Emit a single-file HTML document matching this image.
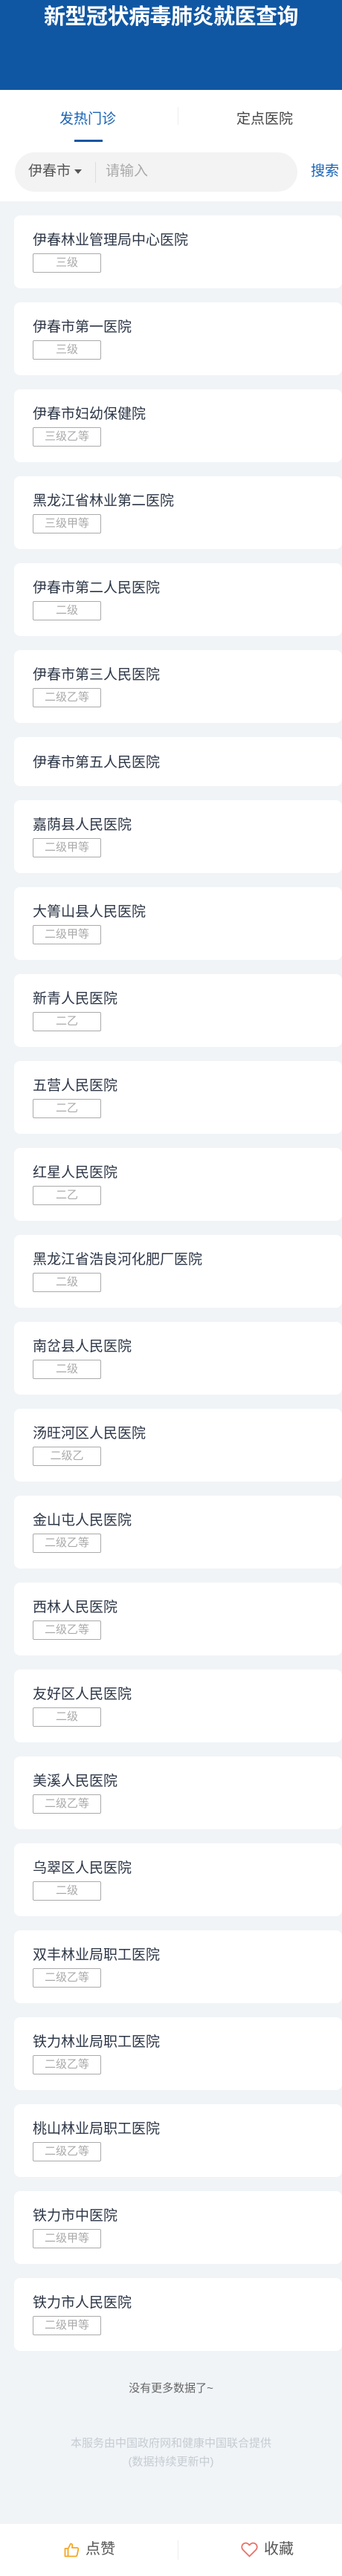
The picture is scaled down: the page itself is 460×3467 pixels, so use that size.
<!DOCTYPE html>
<html><head><meta charset="utf-8"><style>
*{margin:0;padding:0;box-sizing:border-box}
body{width:460px;height:3467px;background:#f0f4f7;font-family:"Liberation Sans","Noto Sans CJK SC",sans-serif;position:relative;overflow:hidden}
.hdr{position:absolute;left:0;top:0;width:460px;height:121px;background:#1057a3;color:#fff;font-size:29px;font-weight:bold;text-align:center;line-height:46px;padding-top:0;letter-spacing:-0.5px}
.top{position:absolute;top:121px;left:0;width:460px;height:150px;background:#fff}
.tab{position:absolute;top:25px;font-size:19px;line-height:30px}
.ul{position:absolute;left:100px;top:67px;width:38px;height:3px;background:#1057a3}
.sep{position:absolute;left:239px;top:23px;width:1px;height:24px;background:#eee}
.pill{position:absolute;left:20px;top:84px;width:380px;height:53px;border-radius:27px;background:#f3f3f3}
.card{position:absolute;left:19px;width:441px;height:98px;background:#fff;border-radius:8px;padding:22px 0 0 25px}
.t{font-size:19px;color:#2c3646;line-height:24px;height:24px}
.g{margin-top:5px;width:92px;height:26px;border:1px solid #aaa;border-radius:2px;color:#aaa;font-size:15px;line-height:24px;text-align:center}
.bb{position:absolute;left:0;top:3397px;width:460px;height:70px;background:#fff}
</style></head><body>
<div class="hdr">新型冠状病毒肺炎就医查询</div>
<div class="top">
<div class="tab" style="left:80px;color:#1a64b5">发热门诊</div>
<div class="tab" style="left:318px;color:#444">定点医院</div>
<div class="sep"></div><div class="ul"></div>
<div class="pill">
<div style="position:absolute;left:18px;top:13px;font-size:19px;color:#555;line-height:26px">伊春市 <span style="display:inline-block;width:0;height:0;border-left:5px solid transparent;border-right:5px solid transparent;border-top:6px solid #555;vertical-align:middle"></span></div>
<div style="position:absolute;left:108px;top:13px;width:1px;height:28px;background:#ddd"></div>
<div style="position:absolute;left:122px;top:13px;font-size:19px;color:#aaa;line-height:26px">请输入</div>
</div>
<div style="position:absolute;left:418px;top:97px;font-size:19px;color:#1a64b5;line-height:26px;white-space:nowrap">搜索</div>
</div>
<div class="card" style="top:290px"><div class="t">伊春林业管理局中心医院</div><div class="g">三级</div></div>
<div class="card" style="top:407px"><div class="t">伊春市第一医院</div><div class="g">三级</div></div>
<div class="card" style="top:524px"><div class="t">伊春市妇幼保健院</div><div class="g">三级乙等</div></div>
<div class="card" style="top:641px"><div class="t">黑龙江省林业第二医院</div><div class="g">三级甲等</div></div>
<div class="card" style="top:758px"><div class="t">伊春市第二人民医院</div><div class="g">二级</div></div>
<div class="card" style="top:875px"><div class="t">伊春市第三人民医院</div><div class="g">二级乙等</div></div>
<div class="card" style="top:992px;height:66px;padding-top:23px"><div class="t">伊春市第五人民医院</div></div>
<div class="card" style="top:1077px"><div class="t">嘉荫县人民医院</div><div class="g">二级甲等</div></div>
<div class="card" style="top:1194px"><div class="t">大箐山县人民医院</div><div class="g">二级甲等</div></div>
<div class="card" style="top:1311px"><div class="t">新青人民医院</div><div class="g">二乙</div></div>
<div class="card" style="top:1428px"><div class="t">五营人民医院</div><div class="g">二乙</div></div>
<div class="card" style="top:1545px"><div class="t">红星人民医院</div><div class="g">二乙</div></div>
<div class="card" style="top:1662px"><div class="t">黑龙江省浩良河化肥厂医院</div><div class="g">二级</div></div>
<div class="card" style="top:1779px"><div class="t">南岔县人民医院</div><div class="g">二级</div></div>
<div class="card" style="top:1896px"><div class="t">汤旺河区人民医院</div><div class="g">二级乙</div></div>
<div class="card" style="top:2013px"><div class="t">金山屯人民医院</div><div class="g">二级乙等</div></div>
<div class="card" style="top:2130px"><div class="t">西林人民医院</div><div class="g">二级乙等</div></div>
<div class="card" style="top:2247px"><div class="t">友好区人民医院</div><div class="g">二级</div></div>
<div class="card" style="top:2364px"><div class="t">美溪人民医院</div><div class="g">二级乙等</div></div>
<div class="card" style="top:2481px"><div class="t">乌翠区人民医院</div><div class="g">二级</div></div>
<div class="card" style="top:2598px"><div class="t">双丰林业局职工医院</div><div class="g">二级乙等</div></div>
<div class="card" style="top:2715px"><div class="t">铁力林业局职工医院</div><div class="g">二级乙等</div></div>
<div class="card" style="top:2832px"><div class="t">桃山林业局职工医院</div><div class="g">二级乙等</div></div>
<div class="card" style="top:2949px"><div class="t">铁力市中医院</div><div class="g">二级甲等</div></div>
<div class="card" style="top:3066px"><div class="t">铁力市人民医院</div><div class="g">二级甲等</div></div>
<div style="position:absolute;left:0;top:3203px;width:460px;text-align:center;font-size:15px;color:#666;line-height:24px">没有更多数据了~</div>
<div style="position:absolute;left:0;top:3276px;width:460px;text-align:center;font-size:15px;color:#c5ccd2;line-height:25px">本服务由中国政府网和健康中国联合提供<br>(数据持续更新中)</div>
<div class="bb">
<svg style="position:absolute;left:86px;top:24px" width="21" height="21" viewBox="0 0 21 21"><path d="M1.5 9h4v10.5h-4zM5.5 9.5L9 2.5c1.5 0 2.5 1 2.3 2.5L11 8h6.5c1.3 0 2 1 1.8 2.2l-1.6 7.5c-.3 1-1 1.8-2 1.8H5.5" fill="none" stroke="#f5a623" stroke-width="1.8" stroke-linejoin="round"/></svg>
<div style="position:absolute;left:115px;top:20px;font-size:20px;color:#555;line-height:28px">点赞</div>
<div style="position:absolute;left:239px;top:22px;width:1px;height:26px;background:#eee"></div>
<svg style="position:absolute;left:324px;top:24px" width="23" height="21" viewBox="0 0 23 21"><path d="M11.5 19.5L3 11C0.5 8.5 0.8 4.5 3.5 2.6c2.5-1.7 5.6-1 8 1.8 2.4-2.8 5.5-3.5 8-1.8 2.7 1.9 3 5.9 0.5 8.4z" fill="none" stroke="#e8716a" stroke-width="1.8" stroke-linejoin="round"/></svg>
<div style="position:absolute;left:355px;top:20px;font-size:20px;color:#555;line-height:28px">收藏</div>
</div>
</body></html>
